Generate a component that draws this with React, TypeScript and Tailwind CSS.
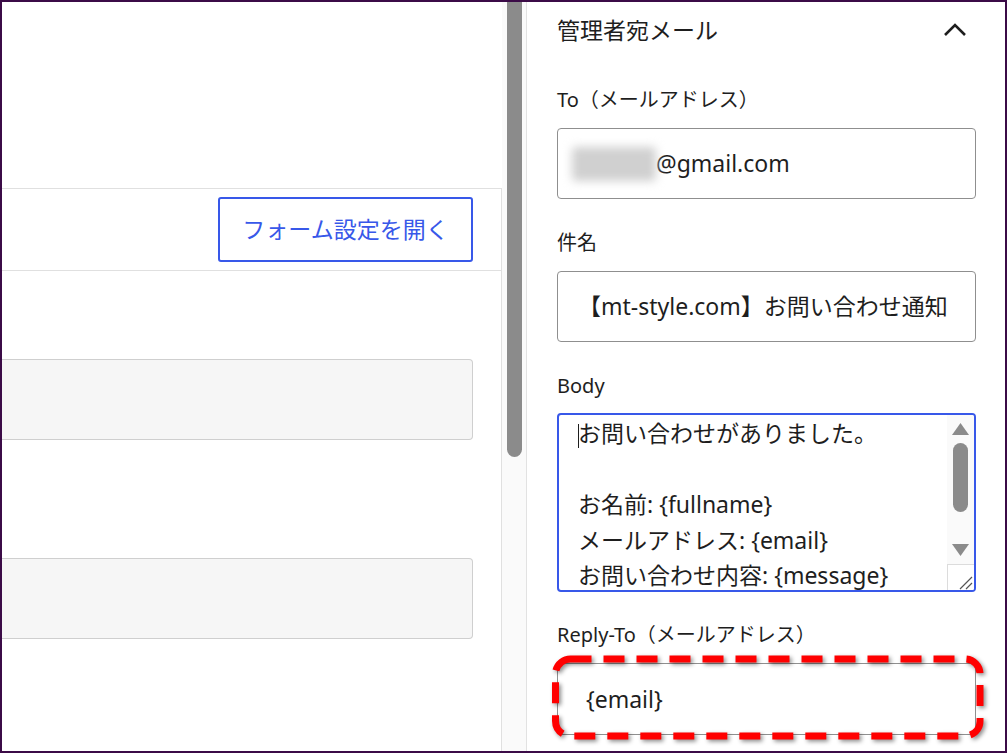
import React from "react";

const FONT = { fontFamily: '"Noto Sans", "Noto Sans CJK JP", sans-serif' };

function Label({ children }: { children: React.ReactNode }) {
  return <div className="h-[28px] leading-[28px] text-[20px] text-[#1e1e1e]">{children}</div>;
}

export default function App() {
  return (
    <div
      style={FONT}
      className="w-[1007px] h-[753px] border-2 border-[#3b0b47] bg-white flex overflow-hidden text-[#1e1e1e]"
    >
      {/* Left pane */}
      <div className="w-[500px] flex flex-col shrink-0">
        <div className="h-[186px] shrink-0" />
        <div className="flex-1 border-t border-r border-[#e0e0e0] flex flex-col">
          <div className="h-[82px] border-b border-[#e0e0e0] flex items-center justify-end pr-[28px] shrink-0">
            <button className="w-[255px] h-[65px] border-2 border-[#3858e9] rounded-[3px] text-[#3858e9] text-[23px] flex items-center justify-center bg-white">
              フォーム設定を開く
            </button>
          </div>
          <div className="pt-[88px] pr-[28px] flex flex-col">
            <div className="h-[81px] bg-[#f6f6f6] border-y border-r border-[#cfcfcf] rounded-r-[4px]" />
            <div className="h-[118px]" />
            <div className="h-[81px] bg-[#f6f6f6] border-y border-r border-[#cfcfcf] rounded-r-[4px]" />
          </div>
        </div>
      </div>

      {/* Scrollbar */}
      <div className="w-[25px] shrink-0 bg-[#fafafa] border-r border-[#e2e2e2]">
        <div className="ml-[5px] w-[15px] h-[455px] bg-[#8b8b8b] rounded-b-full" />
      </div>

      {/* Right panel */}
      <div className="flex-1 pl-[30px] pr-[29px] flex flex-col">
        <div className="h-[56px] flex items-center justify-between shrink-0">
          <span className="text-[23px] leading-none">管理者宛メール</span>
          <svg width="24" height="20" viewBox="0 0 24 20" className="mr-[9px]">
            <path d="M2 15 L12 5 L22 15" fill="none" stroke="#1e1e1e" strokeWidth="2.6" />
          </svg>
        </div>

        <div className="mt-[28px]">
          <Label>To（メールアドレス）</Label>
        </div>
        <div className="mt-[14px] h-[71px] border border-[#8f8f8f] rounded-[4px] flex items-center pl-[14px] text-[23px]">
          <span className="inline-block w-[84px] h-[34px] bg-[#d0d0d0] blur-[5px] rounded" />
          <span>@gmail.com</span>
        </div>

        <div className="mt-[30px]">
          <Label>件名</Label>
        </div>
        <div className="mt-[14px] h-[71px] border border-[#8f8f8f] rounded-[4px] flex items-center pl-[20px] text-[23px] whitespace-nowrap overflow-hidden">
          【mt-style.com】お問い合わせ通知
        </div>

        <div className="mt-[30px]">
          <Label>Body</Label>
        </div>
        <div className="mt-[13px] h-[179px] border-2 border-[#3858e9] rounded-[4px] flex overflow-hidden">
          <div className="flex-1 pl-[19px] pt-[1px] text-[23px] leading-[35.5px] whitespace-nowrap overflow-hidden">
            <div>
              <span className="inline-block w-px h-[24px] bg-[#1e1e1e] align-middle -mr-px" />
              お問い合わせがありました。
            </div>
            <div>&nbsp;</div>
            <div>お名前: {"{fullname}"}</div>
            <div>メールアドレス: {"{email}"}</div>
            <div>お問い合わせ内容: {"{message}"}</div>
          </div>
          <div className="w-[27px] shrink-0 flex flex-col bg-[#fafafa]">
            <div className="flex-1 flex flex-col items-center">
              <svg width="17" height="12" viewBox="0 0 17 12" className="mt-[8px]">
                <path d="M8.5 0 L17 12 L0 12 Z" fill="#8b8b8b" />
              </svg>
              <div className="mt-[8px] w-[15px] h-[69px] rounded-full bg-[#8b8b8b]" />
              <svg width="17" height="12" viewBox="0 0 17 12" className="mt-[32px]">
                <path d="M0 0 L17 0 L8.5 12 Z" fill="#8b8b8b" />
              </svg>
            </div>
            <div className="h-[26px] border-t border-l border-[#dcdcdc] bg-white flex items-end justify-end">
              <svg width="20" height="20" viewBox="0 0 20 20">
                <path d="M6 19 L18 7 M12 19 L18 13" stroke="#555" strokeWidth="1.2" fill="none" />
              </svg>
            </div>
          </div>
        </div>

        <div className="mt-[29px]">
          <Label>Reply-To（メールアドレス）</Label>
        </div>
        <div className="relative mt-[14px] h-[72px]">
          <div className="h-full border border-[#8f8f8f] rounded-[4px] flex items-center pl-[28px] text-[23px]">
            {"{email}"}
          </div>
          <svg
            className="absolute left-[-10px] top-[-10px] overflow-visible"
            width="440"
            height="92"
            viewBox="0 0 440 92"
            style={{ filter: "drop-shadow(2px 2px 2px rgba(0,0,0,0.45))" }}
          >
            <rect
              x="8.5"
              y="6"
              width="424.5"
              height="77"
              rx="15"
              fill="none"
              stroke="#ff0000"
              strokeWidth="7"
              strokeDasharray="21 12"
            />
          </svg>
        </div>
      </div>
    </div>
  );
}
